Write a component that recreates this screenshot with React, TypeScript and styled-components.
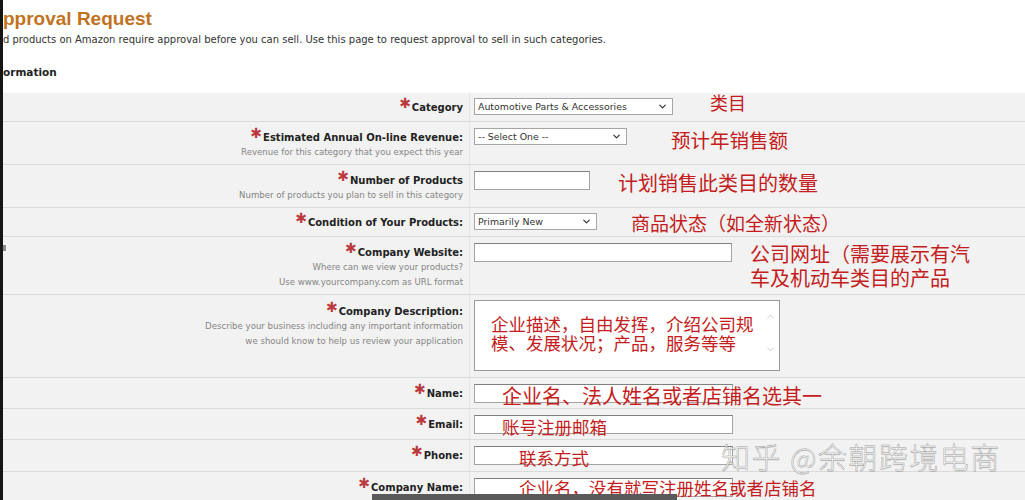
import React from "react";
import styled, { createGlobalStyle } from "styled-components";
import { ChevronDown, ChevronUp } from "lucide-react";

const GlobalStyle = createGlobalStyle`
  html, body {
    margin: 0;
    padding: 0;
    background: #fff;
  }
  body {
    font-family: "DejaVu Sans", Verdana, sans-serif;
    color: #333;
  }
`;

const Page = styled.div`
  position: relative;
  width: 1025px;
  height: 500px;
  overflow: hidden;
  box-sizing: border-box;
  border-left: 3px solid #151515;
  background: #fff;
`;

const Header = styled.header`
  padding-top: 8px;
`;

const Title = styled.h1`
  margin: 0;
  font: bold 19px/22px "Liberation Sans", Arial, sans-serif;
  color: #c2711f;
`;

const Intro = styled.p`
  margin: 0;
  font-size: 10px;
  line-height: 20px;
  color: #333;
`;

const Section = styled.h2`
  margin: 12px 0 0;
  font: bold 10.5px/20px "DejaVu Sans", Verdana, sans-serif;
  color: #222;
`;

const Form = styled.div`
  margin-top: 11px;
  background: #f2f2f2;
`;

const Row = styled.div`
  display: grid;
  grid-template-columns: 466px 1fr;

  & + & {
    border-top: 1px solid #dadada;
  }
`;

const LabelCell = styled.div<{ $top?: number }>`
  display: flex;
  flex-direction: column;
  align-items: flex-end;
  justify-content: ${(p) => (p.$top !== undefined ? "flex-start" : "center")};
  padding: ${(p) => (p.$top !== undefined ? `${p.$top}px 6px 4px 0` : "0 6px 0 0")};
  text-align: right;
`;

const Label = styled.div`
  font: bold 10px/15px "DejaVu Sans", Verdana, sans-serif;
  color: #222;
  white-space: nowrap;
`;

const Star = styled.span`
  color: #bb3a3f;
  font-size: 14px;
  line-height: 0;
  position: relative;
  top: -3px;
  margin-right: 1px;
`;

const Hint = styled.div`
  font: 8.6px/15px "DejaVu Sans", Verdana, sans-serif;
  color: #858585;
  white-space: nowrap;
`;

const InputCell = styled.div<{ $pad?: string }>`
  position: relative;
  display: flex;
  align-items: flex-start;
  padding: ${(p) => p.$pad ?? "6px 4px"};
  border-left: 1px solid #e6e6e6;
`;

const SelectBox = styled.div<{ $w: number }>`
  width: ${(p) => p.$w}px;
  height: 17px;
  box-sizing: border-box;
  display: flex;
  align-items: center;
  justify-content: space-between;
  padding: 0 4px 0 3px;
  border: 1px solid #a6a6a6;
  background: #fff;
  font: 9.4px "DejaVu Sans", Verdana, sans-serif;
  color: #333;
  white-space: nowrap;
`;

const TextInput = styled.input<{ $w: number }>`
  width: ${(p) => p.$w}px;
  height: 19px;
  box-sizing: border-box;
  margin: 0;
  padding: 0 3px;
  border: 1px solid #a3a3a3;
  border-top-color: #7f7f7f;
  background: #fff;
  outline: none;
`;

const MemoBox = styled.div`
  width: 306px;
  height: 71px;
  box-sizing: border-box;
  display: flex;
  border: 1px solid #9a9a9a;
  background: #fff;
`;

const MemoText = styled.div`
  flex: 1;
  padding: 13px 0 0 16px;
  font: 17.5px/19px "Noto Sans CJK SC", sans-serif;
  color: #c41c20;
  white-space: pre;
`;

const MemoScroll = styled.div`
  width: 18px;
  display: flex;
  flex-direction: column;
  align-items: center;
  justify-content: space-between;
  padding: 10px 0 15px;
  color: #b8b8b8;
`;

const Note = styled.span<{ $x: number; $y: number; $size: number }>`
  position: absolute;
  left: ${(p) => p.$x}px;
  top: ${(p) => p.$y}px;
  transform: translateY(-50%);
  font-family: "Noto Sans CJK SC", sans-serif;
  font-size: ${(p) => p.$size}px;
  line-height: 24px;
  color: #c41c20;
  white-space: pre;
  pointer-events: none;
`;

const Watermark = styled.div`
  position: absolute;
  left: 718px;
  top: 441px;
  font: 300 29px/30px "Noto Sans CJK SC", sans-serif;
  letter-spacing: 1.5px;
  color: #fdfdfd;
  -webkit-text-stroke: 0.45px #9c9c9c;
  text-shadow: 0.5px 0.5px 0.5px rgba(0, 0, 0, 0.12);
  white-space: nowrap;
`;

const ScrollThumb = styled.div`
  position: absolute;
  left: 369px;
  top: 494px;
  width: 305px;
  height: 6px;
  background: #5a5a5a;
`;

const EdgeMark = styled.div`
  position: absolute;
  left: -3px;
  top: 245px;
  width: 6px;
  height: 6px;
  background: #8d8d8d;
`;

type Field = {
  label: string;
  hints?: string[];
  top?: number;
};

const FieldLabel = ({ label, hints, top }: Field) => (
  <LabelCell $top={hints ? top ?? 8 : undefined}>
    <Label>
      <Star>✱</Star>
      {label}
    </Label>
    {hints?.map((h) => (
      <Hint key={h}>{h}</Hint>
    ))}
  </LabelCell>
);

const Select = ({ w, value }: { w: number; value: string }) => (
  <SelectBox $w={w}>
    <span>{value}</span>
    <ChevronDown size={11} strokeWidth={2.6} color="#333" />
  </SelectBox>
);

const App = () => {
  return (
    <>
      <GlobalStyle />
      <Page>
        <Header>
          <Title>pproval Request</Title>
          <Intro>
            d products on Amazon require approval before you can sell. Use this page to request approval to
            sell in such categories.
          </Intro>
          <Section>ormation</Section>
        </Header>

        <Form>
          <Row>
            <FieldLabel label="Category" />
            <InputCell $pad="5px 4px 6px">
              <Select w={199} value="Automotive Parts & Accessories" />
              <Note $x={240} $y={8.5} $size={18}>类目</Note>
            </InputCell>
          </Row>

          <Row>
            <FieldLabel
              label="Estimated Annual On-line Revenue:"
              hints={["Revenue for this category that you expect this year"]}
            />
            <InputCell>
              <Select w={153} value="-- Select One --" />
              <Note $x={201} $y={18} $size={19.5}>预计年销售额</Note>
            </InputCell>
          </Row>

          <Row>
            <FieldLabel
              label="Number of Products"
              hints={["Number of products you plan to sell in this category"]}
            />
            <InputCell>
              <TextInput $w={116} />
              <Note $x={148} $y={18} $size={20}>计划销售此类目的数量</Note>
            </InputCell>
          </Row>

          <Row>
            <FieldLabel label="Condition of Your Products:" />
            <InputCell $pad="5px 4px 6px">
              <Select w={123} value="Primarily New" />
              <Note $x={161} $y={15} $size={19}>商品状态（如全新状态）</Note>
            </InputCell>
          </Row>

          <Row>
            <FieldLabel
              label="Company Website:"
              hints={["Where can we view your products?", "Use www.yourcompany.com as URL format"]}
            />
            <InputCell>
              <TextInput $w={258} />
              <Note $x={280} $y={29} $size={20}>
                {"公司网址（需要展示有汽\n车及机动车类目的产品"}
              </Note>
            </InputCell>
          </Row>

          <Row>
            <FieldLabel
              label="Company Description:"
              top={9}
              hints={[
                "Describe your business including any important information",
                "we should know to help us review your application",
              ]}
            />
            <InputCell $pad="5px 4px 6px">
              <MemoBox>
                <MemoText>{"企业描述，自由发挥，介绍公司规\n模、发展状况；产品，服务等等"}</MemoText>
                <MemoScroll>
                  <ChevronUp size={11} strokeWidth={1.6} />
                  <ChevronDown size={11} strokeWidth={1.6} />
                </MemoScroll>
              </MemoBox>
            </InputCell>
          </Row>

          <Row>
            <FieldLabel label="Name:" />
            <InputCell $pad="6px 4px 5px">
              <TextInput $w={259} />
              <Note $x={32} $y={18} $size={20}>企业名、法人姓名或者店铺名选其一</Note>
            </InputCell>
          </Row>

          <Row>
            <FieldLabel label="Email:" />
            <InputCell $pad="6px 4px 5px">
              <TextInput $w={259} />
              <Note $x={32} $y={18} $size={17.5}>账号注册邮箱</Note>
            </InputCell>
          </Row>

          <Row>
            <FieldLabel label="Phone:" />
            <InputCell $pad="6px 4px 6px">
              <TextInput $w={259} />
              <Note $x={49} $y={18} $size={17.5}>联系方式</Note>
            </InputCell>
          </Row>

          <Row>
            <FieldLabel label="Company Name:" />
            <InputCell $pad="6px 4px 6px">
              <TextInput $w={259} />
              <Note $x={49} $y={16} $size={17.5}>企业名，没有就写注册姓名或者店铺名</Note>
            </InputCell>
          </Row>
        </Form>

        <Watermark>知乎 @余朝跨境电商</Watermark>
        <ScrollThumb />
        <EdgeMark />
      </Page>
    </>
  );
};

export default App;
